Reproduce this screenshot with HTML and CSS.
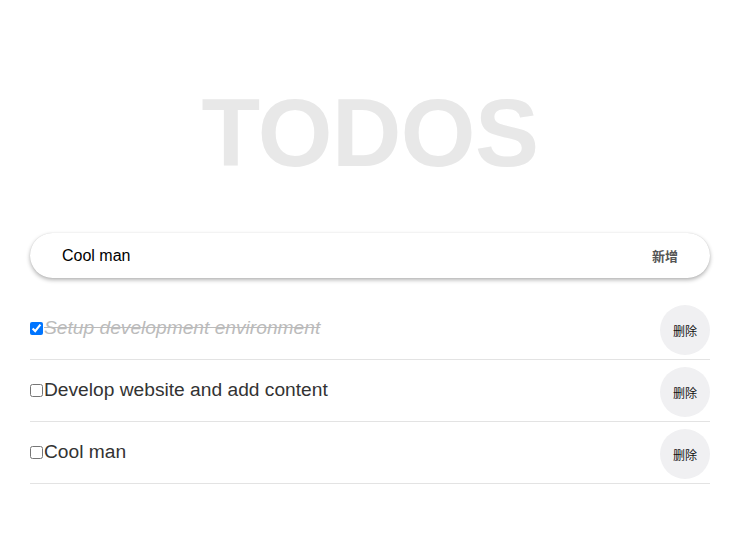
FILE: index.html
```html
<!DOCTYPE html>
<html lang="zh">
<head>
<meta charset="utf-8">
<title>Todos</title>
<link rel="stylesheet" href="styles.css">
</head>
<body>
<div class="app">
  <h1 class="title">TODOS</h1>
  <form class="add-form">
    <input class="add-input" type="text" value="Cool man">
    <button class="add-btn" type="button">新增</button>
  </form>
  <ul class="list">
    <li class="item done">
      <label class="item-label"><input type="checkbox" class="check" checked><span class="item-text">Setup development environment</span></label>
      <button class="del-btn" type="button">删除</button>
    </li>
    <li class="item">
      <label class="item-label"><input type="checkbox" class="check"><span class="item-text">Develop website and add content</span></label>
      <button class="del-btn" type="button">删除</button>
    </li>
    <li class="item">
      <label class="item-label"><input type="checkbox" class="check"><span class="item-text">Cool man</span></label>
      <button class="del-btn" type="button">删除</button>
    </li>
  </ul>
</div>
</body>
</html>
```
FILE: styles.css
```css
* { box-sizing: border-box; }
html, body { margin: 0; padding: 0; background: #fff; }
body {
  font-family: "Liberation Sans", Arial, "Noto Sans CJK SC", sans-serif;
  color: #333;
}
.app {
  width: 680px;
  margin: 0 0 0 30px;
  padding-top: 78px;
}
.title {
  margin: 0;
  text-align: center;
  font-size: 96px;
  line-height: 110px;
  font-weight: 700;
  color: #e8e8e8;
  letter-spacing: -0.5px;
}
.add-form {
  margin-top: 45px;
  display: flex;
  align-items: center;
  height: 45px;
  border-radius: 23px;
  background: #fff;
  box-shadow: 0 2px 4px rgba(0,0,0,0.3), 0 0 1px rgba(0,0,0,0.15);
}
.add-input {
  flex: 1;
  border: none;
  outline: none;
  background: transparent;
  padding: 0 0 0 32px;
  height: 100%;
  font-family: "Liberation Sans", Arial, sans-serif;
  font-size: 16px;
  color: #000;
}
.add-btn {
  border: none;
  background: transparent;
  padding: 0 32px 0 10px;
  height: 100%;
  font-family: "Noto Sans CJK SC", sans-serif;
  font-size: 13px;
  font-weight: 600;
  color: #555;
}
.list {
  list-style: none;
  margin: 20px 0 0;
  padding: 0;
}
.item {
  display: flex;
  align-items: center;
  justify-content: space-between;
  padding: 7px 0 4px;
  border-bottom: 1px solid #e3e3e3;
}
.item-label {
  display: flex;
  align-items: center;
  font-size: 19.2px;
  color: #333;
  margin-bottom: 4px;
}
.check {
  margin: 0 1px 0 0;
  width: 13px;
  height: 13px;
}
.done .item-text {
  color: #bbb;
  font-style: italic;
  text-decoration: line-through;
}
.del-btn {
  width: 50px;
  height: 50px;
  border: none;
  border-radius: 50%;
  background: #f0f0f2;
  font-family: "Noto Sans CJK SC", sans-serif;
  font-size: 12px;
  color: #111;
  padding: 0;
}
```
